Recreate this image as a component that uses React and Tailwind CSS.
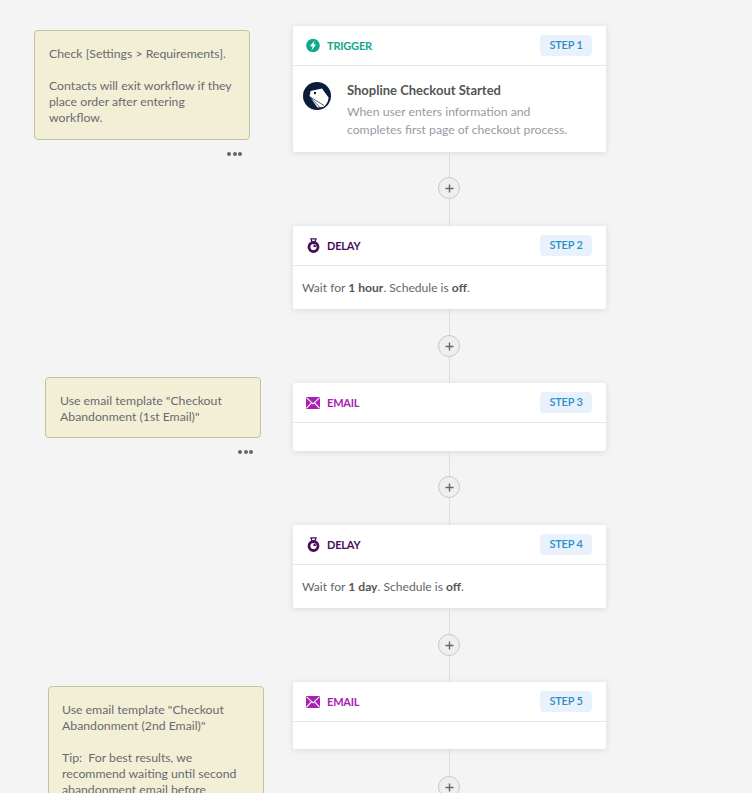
import React from "react";

const font = "font-['Lato','Noto_Sans',sans-serif]";

function Bolt() {
  return (
    <svg width="15" height="15" viewBox="0 0 15 15">
      <circle cx="7.5" cy="7.5" r="7.3" fill="#10a88e" />
      <path d="M9.3 2.2 4.2 8.4h2.9L5.9 12.8l5-6.3H8z" fill="#fff" />
    </svg>
  );
}

function Timer() {
  return (
    <svg width="13" height="15" viewBox="0 0 13 15">
      <path d="M4 0.8h5L7.9 4.4H5.1z" stroke="#4a0d5c" strokeWidth="1.3" fill="none" />
      <circle cx="6.5" cy="9" r="4.5" stroke="#4a0d5c" strokeWidth="2.8" fill="none" />
      <path d="M6.5 9V6.4A2.6 2.6 0 0 1 9.1 9z" fill="#4a0d5c" />
    </svg>
  );
}

function Mail() {
  return (
    <svg width="14" height="12" viewBox="0 0 14 12">
      <rect width="14" height="12" rx="1" fill="#a821b0" />
      <path d="M0.6 0.8 7 6.8 13.4 0.8M0.6 11.2 5.4 5.8M13.4 11.2 8.6 5.8" stroke="#fff" strokeWidth="1.1" fill="none" />
    </svg>
  );
}

function ShoplineLogo() {
  return (
    <svg width="28" height="28" viewBox="0 0 28 28" className="mt-[1px] shrink-0">
      <circle cx="14" cy="14" r="14" fill="#0b1d3a" />
      <path d="M7.5 9 L19 6.5 L25.5 15.5 C25.5 19 23.5 23 20 25 L14.5 25.5 L6.5 14.5z" fill="#fff" />
      <circle cx="12" cy="11" r="1.2" fill="#0b1d3a" />
      <path d="M6.5 14.5 21 23.5M6.5 14.5 17 25.5M6.5 14.5 13 26" stroke="#0b1d3a" strokeWidth="0.7" fill="none" />
    </svg>
  );
}

function Header({ icon, label, color, step }) {
  return (
    <div className="flex h-[40px] items-center justify-between border-b border-[#e8e8e8] pl-[13px] pr-[14px]">
      <div className="flex items-center gap-[7px]">
        <span className="flex w-[14px] justify-center">{icon}</span>
        <span className={`pt-[1px] text-[11px] font-bold tracking-[-0.2px] ${color}`}>{label}</span>
      </div>
      <span className="flex h-[21px] w-[52px] items-center justify-center rounded-[4px] bg-[#e9f1fc] text-[11px] font-semibold tracking-[-0.2px] text-[#2a8fc9]">
        {step}
      </span>
    </div>
  );
}

function Card({ children }) {
  return <div className="w-[313px] rounded-[2px] bg-white shadow-[0_1px_7px_rgba(0,0,0,0.11)]">{children}</div>;
}

function Connector({ h, top }) {
  return (
    <div className="relative flex w-[313px] justify-center pr-[1px]" style={{ height: h }}>
      <div className="h-full w-px bg-[#dcdcdc]" />
      <div
        className="absolute left-[145px] flex h-[22px] w-[22px] items-center justify-center rounded-full border border-[#c9c9c9] bg-[#efefef]"
        style={{ top }}
      >
        <svg width="9" height="9" viewBox="0 0 9 9">
          <path d="M4.5 0.5v8M0.5 4.5h8" stroke="#666" strokeWidth="1.4" />
        </svg>
      </div>
    </div>
  );
}

function Note({ className, children, dots, box = "pb-[13px] pl-[14px]" }) {
  return (
    <div className={`absolute w-[216px] ${className}`}>
      <div className={`rounded-[4px] border border-[#c6c19b] bg-[#f3efd6] pt-[15px] pr-[14px] text-[12.25px] leading-[16px] text-[#666b70] ${box}`}>
        {children}
      </div>
      {dots && (
        <div className="mt-[12px] mr-[8px] flex justify-end gap-[1.5px]">
          <span className="h-[4px] w-[4px] rounded-full bg-[#666]" />
          <span className="h-[4px] w-[4px] rounded-full bg-[#666]" />
          <span className="h-[4px] w-[4px] rounded-full bg-[#666]" />
        </div>
      )}
    </div>
  );
}

function WaitBody({ amount }) {
  return (
    <div className="flex h-[43px] items-center px-[9px] pt-[2px] text-[12.1px] text-[#666]">
      <span>
        Wait for <b className="font-bold text-[#555]">{amount}</b>. Schedule is <b className="font-bold text-[#555]">off</b>.
      </span>
    </div>
  );
}

export default function App() {
  return (
    <div className={`relative h-[793px] w-[752px] overflow-hidden bg-[#f4f4f4] ${font}`}>
      <Note className="left-[34px] top-[30px]" dots>
        <p>Check [Settings &gt; Requirements].</p>
        <p className="mt-[16px]">Contacts will exit workflow if they place order after entering workflow.</p>
      </Note>
      <Note className="left-[45px] top-[377px]" dots box="pb-[12px] pl-[14px]">
        <p>Use email template "Checkout Abandonment (1st Email)"</p>
      </Note>
      <Note className="left-[48px] top-[686px]" box="pb-[13px] pl-[13px]">
        <p>Use email template "Checkout Abandonment (2nd Email)"</p>
        <p className="mt-[16px]">Tip:&nbsp; For best results, we recommend waiting until second abandonment email before</p>
      </Note>

      <div className="ml-[293px] flex flex-col pt-[26px]">
        <Card>
          <Header icon={<Bolt />} label="TRIGGER" color="text-[#10a88e]" step="STEP 1" />
          <div className="flex h-[86px] gap-[15px] pl-[10px] pr-[11px] pt-[15px]">
            <ShoplineLogo />
            <div className="pl-[1px]">
              <div className="text-[13px] font-bold leading-[18px] text-[#555]">Shopline Checkout Started</div>
              <div className="mt-[4px] text-[12.2px] leading-[18px] text-[#959ba3]">
                When user enters information and<br />completes first page of checkout process.
              </div>
            </div>
          </div>
        </Card>
        <Connector h={74} top={25} />
        <Card>
          <Header icon={<Timer />} label="DELAY" color="text-[#4a0d5c]" step="STEP 2" />
          <WaitBody amount="1 hour" />
        </Card>
        <Connector h={74} top={26} />
        <Card>
          <Header icon={<Mail />} label="EMAIL" color="text-[#a821b0]" step="STEP 3" />
          <div className="h-[28px]" />
        </Card>
        <Connector h={74} top={25} />
        <Card>
          <Header icon={<Timer />} label="DELAY" color="text-[#4a0d5c]" step="STEP 4" />
          <WaitBody amount="1 day" />
        </Card>
        <Connector h={74} top={26} />
        <Card>
          <Header icon={<Mail />} label="EMAIL" color="text-[#a821b0]" step="STEP 5" />
          <div className="h-[27px]" />
        </Card>
        <Connector h={74} top={27} />
      </div>
    </div>
  );
}
